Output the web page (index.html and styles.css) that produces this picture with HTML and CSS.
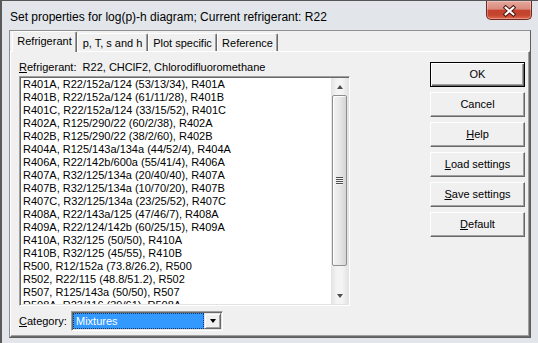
FILE: index.html
```html
<!DOCTYPE html>
<html>
<head>
<meta charset="utf-8">
<title>Set properties</title>
<link rel="stylesheet" href="styles.css">
</head>
<body>
<div class="window">
  <div class="titlebar">
    <span class="title">Set properties for log(p)-h diagram; Current refrigerant: R22</span>
    <div class="close">
      <svg width="46" height="19" viewBox="0 0 46 19">
        <path d="M19.5 6.5 L27.5 13.5 M27.5 6.5 L19.5 13.5" stroke="#4a1410" stroke-width="4.2" stroke-linecap="square" fill="none"/>
        <path d="M19.5 6.5 L27.5 13.5 M27.5 6.5 L19.5 13.5" stroke="#ffffff" stroke-width="2.2" stroke-linecap="square" fill="none"/>
      </svg>
    </div>
  </div>
  <div class="client">
    <div class="tabs">
      <div class="tab active t1">Refrigerant</div>
      <div class="tab t2">p, T, s and h</div>
      <div class="tab t3">Plot specific</div>
      <div class="tab t4">Reference</div>
    </div>
    <div class="panel">
      <div class="main">
        <div class="reflabel"><u>R</u>efrigerant:&nbsp; R22, CHClF2, Chlorodifluoromethane</div>
        <div class="listbox">
          <ul class="items">
            <li>R401A, R22/152a/124 (53/13/34), R401A</li>
            <li>R401B, R22/152a/124 (61/11/28), R401B</li>
            <li>R401C, R22/152a/124 (33/15/52), R401C</li>
            <li>R402A, R125/290/22 (60/2/38), R402A</li>
            <li>R402B, R125/290/22 (38/2/60), R402B</li>
            <li>R404A, R125/143a/134a (44/52/4), R404A</li>
            <li>R406A, R22/142b/600a (55/41/4), R406A</li>
            <li>R407A, R32/125/134a (20/40/40), R407A</li>
            <li>R407B, R32/125/134a (10/70/20), R407B</li>
            <li>R407C, R32/125/134a (23/25/52), R407C</li>
            <li>R408A, R22/143a/125 (47/46/7), R408A</li>
            <li>R409A, R22/124/142b (60/25/15), R409A</li>
            <li>R410A, R32/125 (50/50), R410A</li>
            <li>R410B, R32/125 (45/55), R410B</li>
            <li>R500, R12/152a (73.8/26.2), R500</li>
            <li>R502, R22/115 (48.8/51.2), R502</li>
            <li>R507, R125/143a (50/50), R507</li>
            <li>R508A, R23/116 (39/61), R508A</li>
          </ul>
          <div class="scrollbar">
            <div class="arrow up"><span class="tri-up"></span></div>
            <div class="track"><div class="thumb"><span class="grip"></span></div></div>
            <div class="arrow down"><span class="tri-down"></span></div>
          </div>
        </div>
        <div class="catrow">
          <span class="catlabel"><u>C</u>ategory:</span>
          <div class="combo">
            <span class="combosel">Mixtures</span>
            <span class="dropbtn"><span class="tri-black"></span></span>
          </div>
        </div>
      </div>
      <div class="buttons">
        <div class="btn default">OK</div>
        <div class="btn">Cancel</div>
        <div class="btn"><u>H</u>elp</div>
        <div class="btn"><u>L</u>oad settings</div>
        <div class="btn"><u>S</u>ave settings</div>
        <div class="btn"><u>D</u>efault</div>
      </div>
    </div>
  </div>
</div>
</body>
</html>
```

FILE: styles.css
```css
* { box-sizing: border-box; }
html, body { margin: 0; padding: 0; }
body {
  width: 538px;
  height: 343px;
  overflow: hidden;
  background: #4a4a4a;
  font-family: "Liberation Sans", Arial, sans-serif;
  font-size: 11px;
  color: #000;
}
.window {
  width: 540px;
  height: 343px;
  border-top: 1px solid #565656;
  border-left: 2px solid #5a5a5a;
  background: #e2e6eb;
  display: flex;
  flex-direction: column;
}
.titlebar {
  height: 29px;
  display: flex;
  align-items: flex-start;
}
.title {
  font-size: 12px;
  line-height: 16px;
  padding: 8px 0 0 8px;
  color: #000;
}
.close {
  margin-left: auto;
  margin-right: 8px;
  width: 46px;
  height: 19px;
  border: 1px solid #6f2a22;
  border-top: none;
  border-radius: 0 0 5px 5px;
  background: linear-gradient(to bottom, #e6a89e 0%, #d98a7c 45%, #c4412e 52%, #c3452f 78%, #e2694c 100%);
  box-shadow: inset 0 0 0 1px rgba(255, 255, 255, 0.3);
  display: flex;
}
.close svg { display: block; }

.client {
  margin-left: 7px;
  width: 522px;
  height: 308px;
  border: 1px solid;
  border-color: #8f8f8f #5e5e5e #5e5e5e #8f8f8f;
  background: #f0f0f0;
  display: flex;
  flex-direction: column;
}
.tabs {
  height: 20px;
  display: flex;
  align-items: flex-end;
  padding-left: 2px;
  position: relative;
  z-index: 1;
}
.tab {
  height: 18px;
  padding-top: 3px;
  line-height: 13px;
  text-align: center;
  white-space: nowrap;
  border-top: 1px solid #fff;
  border-left: 1px solid #fff;
  border-right: 1px solid #696969;
  box-shadow: inset -1px 0 #a0a0a0;
  border-radius: 2px 2px 0 0;
  background: #f0f0f0;
}
.tab.active { height: 21px; margin-bottom: -1px; }
.t1 { width: 65px; }
.t2 { width: 71px; }
.t3 { width: 69px; }
.t4 { width: 61px; }

.panel {
  flex: 1;
  border: 1px solid;
  border-color: #fff #696969 #696969 #fff;
  box-shadow: inset -1px -1px #a0a0a0;
  display: flex;
  padding: 9px 0 0 8px;
}
.main {
  width: 331px;
  display: flex;
  flex-direction: column;
}
.reflabel {
  height: 13px;
  line-height: 13px;
  white-space: nowrap;
  margin-bottom: 2px;
}
.listbox {
  height: 230px;
  border: 1px solid;
  border-color: #a0a0a0 #fff #fff #a0a0a0;
  box-shadow: inset 1px 1px #696969, inset -1px -1px #e3e3e3;
  padding: 1px;
  display: flex;
}
.items {
  flex: 1;
  margin: 0;
  padding: 0 0 0 2px;
  list-style: none;
  background: #fff;
  overflow: hidden;
}
.items li {
  height: 13px;
  line-height: 13px;
  white-space: nowrap;
}
.scrollbar {
  width: 17px;
  display: flex;
  flex-direction: column;
  background: linear-gradient(to right, #e3e3e3, #f4f4f4 35%, #f4f4f4 65%, #e3e3e3);
}
.arrow {
  height: 17px;
  display: flex;
  align-items: center;
  justify-content: center;
}
.tri-up, .tri-down {
  width: 0;
  height: 0;
  border-left: 3.5px solid transparent;
  border-right: 3.5px solid transparent;
}
.tri-up { border-bottom: 4px solid #4d4d4d; }
.tri-down { border-top: 4px solid #4d4d4d; }
.track {
  flex: 1;
  padding: 0 1px;
}
.thumb {
  height: 171px;
  border: 1px solid #8e8f8f;
  border-radius: 2px;
  background: linear-gradient(to right, #f2f2f2, #e8e8e8 50%, #d4d4d4);
  box-shadow: inset 1px 1px rgba(255, 255, 255, 0.9);
  display: flex;
  align-items: center;
  justify-content: center;
}
.grip {
  width: 7px;
  height: 8px;
  background: repeating-linear-gradient(to bottom, #4f4f4f 0, #4f4f4f 1px, #f4f4f4 1px, #f4f4f4 2px);
}

.catrow {
  margin-top: 5px;
  height: 20px;
  display: flex;
  align-items: center;
}
.catlabel {
  width: 52px;
  line-height: 13px;
}
.combo {
  width: 152px;
  height: 20px;
  border: 1px solid;
  border-color: #a0a0a0 #fff #fff #a0a0a0;
  box-shadow: inset 1px 1px #696969, inset -1px -1px #e3e3e3;
  padding: 1px;
  display: flex;
  background: #fff;
}
.combosel {
  flex: 1;
  background: #3399ff;
  color: #fff;
  line-height: 14px;
  padding-left: 2px;
  border: 1px dotted #16365e;
}
.dropbtn {
  width: 17px;
  background: #f0f0f0;
  border: 1px solid;
  border-color: #e3e3e3 #696969 #696969 #e3e3e3;
  box-shadow: inset 1px 1px #fff, inset -1px -1px #a0a0a0;
  display: flex;
  align-items: center;
  justify-content: center;
}
.tri-black {
  width: 0;
  height: 0;
  border-left: 3.5px solid transparent;
  border-right: 3.5px solid transparent;
  border-top: 4px solid #000;
}

.buttons {
  margin-left: 80px;
  margin-top: 1px;
  display: flex;
  flex-direction: column;
  gap: 5px;
}
.btn {
  width: 95px;
  height: 25px;
  line-height: 23px;
  text-align: center;
  white-space: nowrap;
  background: #f0f0f0;
  border: 1px solid;
  border-color: #fff #696969 #696969 #fff;
  box-shadow: inset -1px -1px #a0a0a0;
}
.btn.default {
  border: 1px solid #000;
  box-shadow: inset 1px 1px #fff, inset -1px -1px #696969, inset -2px -2px #a0a0a0;
}
```
